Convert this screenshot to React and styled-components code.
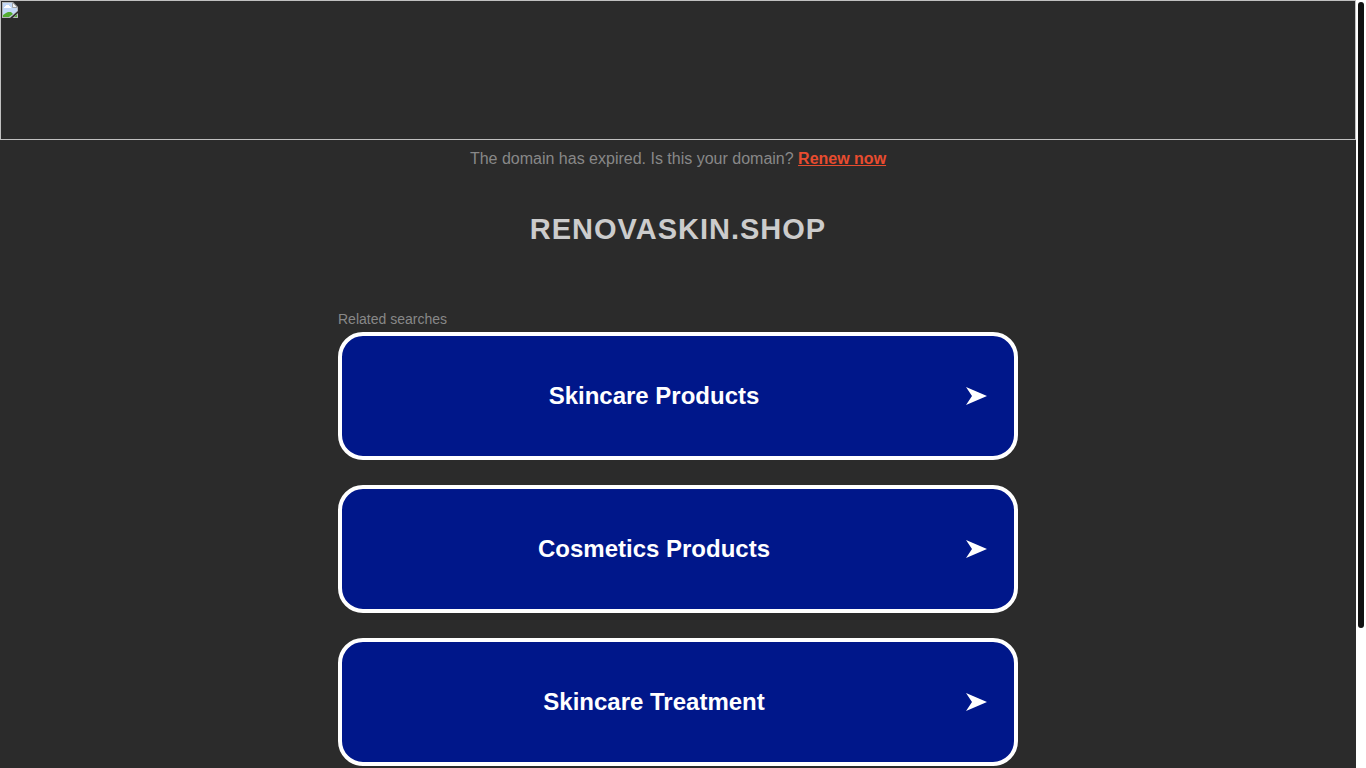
import React from 'react';
import styled, { createGlobalStyle } from 'styled-components';

const GlobalStyle = createGlobalStyle`
    body {
        margin: 0;
        background-color: #2b2b2b;
        font-family: "Liberation Sans", Arial, sans-serif;
    }
`;

const Page = styled.div`
    display: flex;
    height: 100vh;
    overflow: hidden;
`;

const Content = styled.main`
    flex: 1;
    min-width: 0;
    overflow: hidden;
`;

const Banner = styled.div`
    box-sizing: border-box;
    height: 140px;
    padding: 1px;
    border: 1px solid #c0c0c0;

    svg {
        display: block;
    }
`;

const Notice = styled.p`
    margin: 0;
    padding: 9px 0;
    color: #888;
    font-size: 16px;
    line-height: 20px;
    text-align: center;

    a {
        color: #e84c2f;
        font-weight: bold;
    }
`;

const Title = styled.h1`
    margin: 33px 0 63px;
    color: #ccc;
    font-size: 29px;
    line-height: 36px;
    letter-spacing: 1px;
    text-align: center;
    text-transform: uppercase;
`;

const Related = styled.section`
    box-sizing: border-box;
    width: 100%;
    max-width: 680px;
    margin: 0 auto;

    h2 {
        margin: 0 0 4px;
        color: #888;
        font-size: 14px;
        font-weight: normal;
        line-height: 18px;
    }
`;

const SearchLink = styled.a`
    box-sizing: border-box;
    display: flex;
    align-items: center;
    min-height: 128px;
    margin-bottom: 25px;
    padding-right: 27px;
    border: 4px solid #fff;
    border-radius: 25px;
    background-color: #00178a;
    color: #fff;
    font-size: 24px;
    font-weight: bold;
    line-height: 28px;
    text-align: center;
    text-decoration: none;

    span {
        flex: 1;
    }

    svg {
        flex: none;
    }
`;

const ScrollTrack = styled.div`
    box-sizing: border-box;
    flex: none;
    width: 10px;
    padding: 2px;
    background-color: #fff;
`;

const ScrollThumb = styled.div`
    height: 82%;
    border-radius: 3px;
    background-color: #111;
`;

const BrokenImage = () => (
    <svg width="16" height="16" viewBox="0 0 16 16" aria-hidden="true">
        <path d="M0 0h11l5 5v4L8 16H0z" fill="#b4b8ba"/>
        <path d="M1 1h10v4h4v4L8 15H1z" fill="#c3d9f7"/>
        <path d="M2 6V5h1V4h1V3h3v1h1v1h1v1z" fill="#fff"/>
        <path d="M1 15v-2l3-2 2-1h3l2 2-4 3z" fill="#54ad32"/>
        <path d="M10.500 0.500v5h5z" fill="#f4f4f4" stroke="#a2a5a7" strokeWidth="1"/>
        <path d="M16 11v5h-5.500z" fill="#b4b8ba"/>
        <path d="M15 12.500V15h-3z" fill="#54ad32"/>
    </svg>
);

const Arrow = () => (
    <svg width="21" height="18" viewBox="0 0 21 18" aria-hidden="true">
        <path d="M0 0L21 9L0 18L6 9z" fill="#fff"/>
    </svg>
);

const searches = ['Skincare Products', 'Cosmetics Products', 'Skincare Treatment'];

const App = () => (
    <Page>
        <GlobalStyle/>
        <Content>
            <Banner>
                <BrokenImage/>
            </Banner>
            <Notice>
                The domain has expired. Is this your domain? <a href="#renew">Renew now</a>
            </Notice>
            <Title>renovaskin.shop</Title>
            <Related>
                <h2>Related searches</h2>
                {searches.map(name => (
                    <SearchLink key={name} href="#search">
                        <span>{name}</span>
                        <Arrow/>
                    </SearchLink>
                ))}
            </Related>
        </Content>
        <ScrollTrack>
            <ScrollThumb/>
        </ScrollTrack>
    </Page>
);

export default App;
